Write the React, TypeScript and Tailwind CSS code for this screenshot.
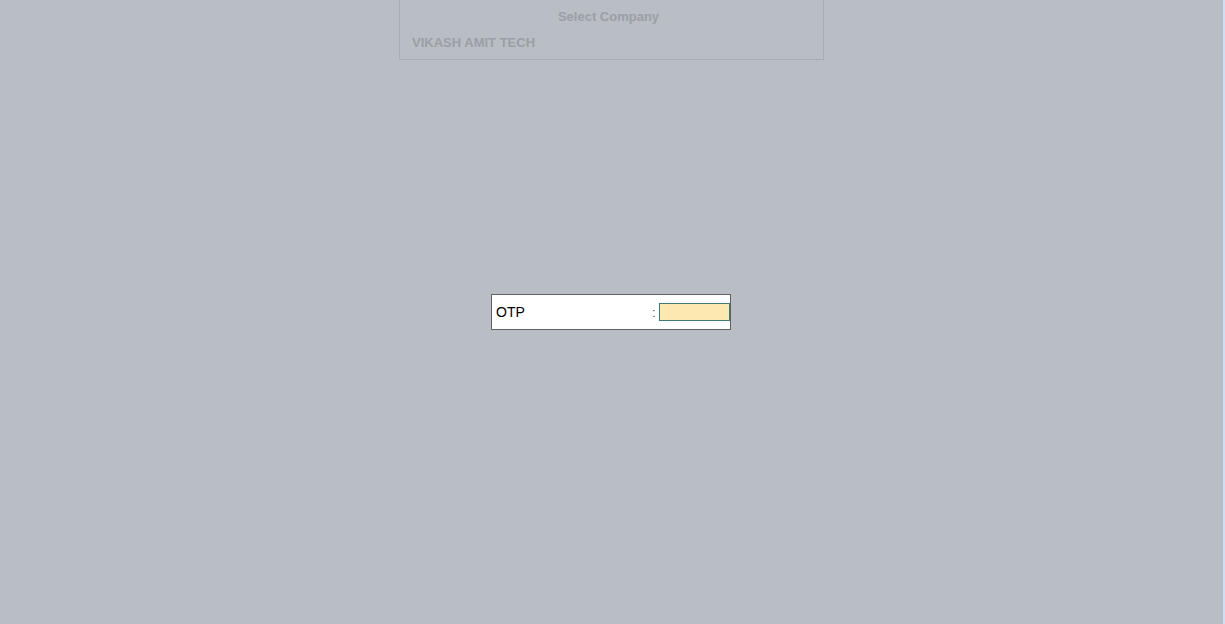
export default function App() {
  return (
    <div
      className="flex h-[624px] w-full overflow-hidden bg-[#b9bdc4]"
      style={{ fontFamily: '"Liberation Sans", Arial, sans-serif' }}
    >
      <div className="flex flex-1 flex-col">
        {/* Select company panel (behind overlay) */}
        <div className="ml-[399px] flex h-[60px] w-[425px] flex-col border border-t-0 border-[#a8acb3] pl-[12px] pr-[18px]">
          <div className="mt-[9px] text-center text-[13px] font-bold leading-[16px] text-[#9b9fa6]">
            Select Company
          </div>
          <div className="mt-[10px] text-[13px] font-bold leading-[16px] text-[#9b9fa6]">
            VIKASH AMIT TECH
          </div>
        </div>

        {/* OTP box */}
        <div className="ml-[491px] mt-[234px] flex h-[36px] w-[240px] items-center border border-[#5f6366] bg-white pl-[4px]">
          <span className="w-[157px] text-[14px] text-black">OTP</span>
          <span className="text-[13px] leading-none text-[#555]">:</span>
          <div className="ml-[3px] h-[18px] w-[72px] border border-[#3c7a78] bg-[#fde8b0]" />
        </div>
      </div>
      <div className="w-[2px] bg-[#cfe0f0]" />
    </div>
  );
}
